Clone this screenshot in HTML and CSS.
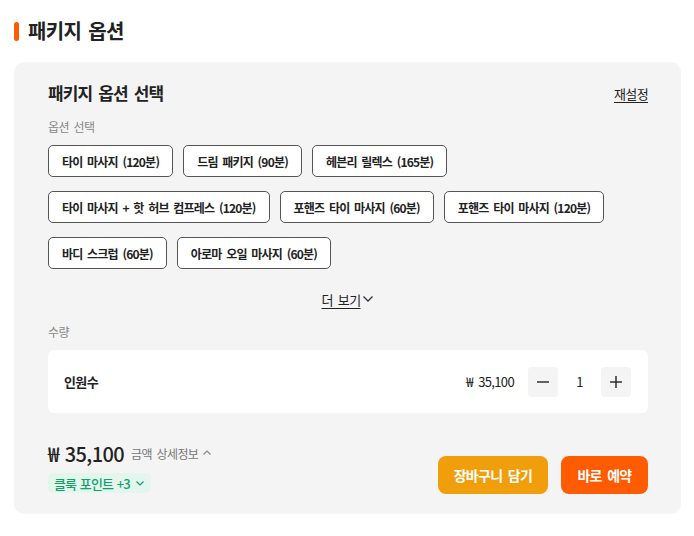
FILE: index.html
```html
<!DOCTYPE html>
<html lang="ko">
<head>
<meta charset="utf-8">
<link rel="stylesheet" href="styles.css">
</head>
<body>
<div class="page">
  <h2 class="section-title"><span class="bar"></span>패키지 옵션</h2>
  <div class="card">
    <div class="card-head">
      <h3 class="card-title">패키지 옵션 선택</h3>
      <a class="reset">재설정</a>
    </div>
    <div class="label label-options">옵션 선택</div>
    <div class="chips">
      <button class="chip">타이 마사지 (120분)</button>
      <button class="chip">드림 패키지 (90분)</button>
      <button class="chip">헤븐리 릴렉스 (165분)</button>
      <button class="chip">타이 마사지 + 핫 허브 컴프레스 (120분)</button>
      <button class="chip">포핸즈 타이 마사지 (60분)</button>
      <button class="chip">포핸즈 타이 마사지 (120분)</button>
      <button class="chip">바디 스크럽 (60분)</button>
      <button class="chip">아로마 오일 마사지 (60분)</button>
    </div>
    <div class="more"><a class="more-link">더 보기</a><svg class="chev" width="12" height="12" viewBox="0 0 12 12"><polyline points="1.5,3.5 6,8 10.5,3.5" fill="none" stroke="#333" stroke-width="1.3"/></svg></div>
    <div class="label label-qty">수량</div>
    <div class="qty-card">
      <span class="qty-name">인원수</span>
      <div class="qty-right">
        <span class="qty-price">₩ 35,100</span>
        <button class="qty-btn"><svg width="14" height="14" viewBox="0 0 14 14"><line x1="1" y1="7" x2="13" y2="7" stroke="#222" stroke-width="1.4"/></svg></button>
        <span class="qty-num">1</span>
        <button class="qty-btn"><svg width="14" height="14" viewBox="0 0 14 14"><line x1="1" y1="7" x2="13" y2="7" stroke="#222" stroke-width="1.4"/><line x1="7" y1="1" x2="7" y2="13" stroke="#222" stroke-width="1.4"/></svg></button>
      </div>
    </div>
    <div class="footer">
      <div class="total">
        <div class="price-line">
          <span class="price">₩ 35,100</span>
          <span class="detail">금액 상세정보</span>
          <svg class="up" width="10" height="10" viewBox="0 0 10 10"><polyline points="1.5,6.5 5,3 8.5,6.5" fill="none" stroke="#888" stroke-width="1.2"/></svg>
        </div>
        <div class="points">클룩 포인트 +3<svg class="pt-chev" width="10" height="10" viewBox="0 0 10 10"><polyline points="1.5,3.5 5,7 8.5,3.5" fill="none" stroke="#12a06a" stroke-width="1.2"/></svg></div>
      </div>
      <div class="actions">
        <button class="btn btn-cart">장바구니 담기</button>
        <button class="btn btn-book">바로 예약</button>
      </div>
    </div>
  </div>
</div>
</body>
</html>
```

FILE: styles.css
```css
* { box-sizing: border-box; }
html, body {
  margin: 0;
  padding: 0;
  background: #ffffff;
}
body {
  font-family: "Noto Sans CJK KR", "Noto Sans", "Liberation Sans", sans-serif;
  color: #222222;
  letter-spacing: -0.04em;
  word-spacing: 2px;
  width: 694px;
  height: 536px;
  overflow: hidden;
}
.page {
  padding: 16px 13px 0 14px;
}
.section-title {
  display: flex;
  align-items: center;
  margin: 0;
  height: 30px;
  font-size: 20px;
  font-weight: 700;
  line-height: 30px;
  color: #222;
}
.bar {
  display: inline-block;
  width: 5px;
  height: 19px;
  background: #ff5b00;
  border-radius: 3px;
  margin-right: 9px;
}
.card {
  margin-top: 16px;
  width: 667px;
  background: #f4f4f4;
  border-radius: 10px;
  padding: 19px 33px 20px 34px;
}
.card-head {
  display: flex;
  justify-content: space-between;
  align-items: center;
  height: 24px;
}
.card-title {
  margin: 0;
  font-size: 17px;
  font-weight: 700;
  line-height: 24px;
  color: #222;
  letter-spacing: -0.05em;
}
.reset {
  font-size: 13px;
  color: #222;
  text-decoration: underline;
  text-underline-offset: 3px;
  cursor: pointer;
}
.label {
  font-size: 12px;
  line-height: 18px;
  color: #888;
}
.label-options { margin-top: 13px; }
.chips {
  margin-top: 9px;
  display: flex;
  flex-wrap: wrap;
  column-gap: 10px;
  row-gap: 14px;
}
.chip {
  height: 32px;
  padding: 0 13px;
  border: 1px solid #555;
  border-radius: 5px;
  background: #fff;
  font-family: inherit;
  letter-spacing: -0.065em;
  word-spacing: 2px;
  font-size: 12px;
  font-weight: 700;
  color: #222;
}
.more {
  margin-top: 20px;
  display: flex;
  justify-content: center;
  align-items: center;
  height: 20px;
  font-size: 13px;
  color: #222;
}
.more-link {
  text-decoration: underline;
  text-underline-offset: 3px;
}
.chev { margin-left: 2px; }
.label-qty { margin-top: 14px; }
.qty-card {
  margin-top: 9px;
  height: 63px;
  background: #fff;
  border-radius: 6px;
  padding: 0 17px 0 16px;
  display: flex;
  align-items: center;
  justify-content: space-between;
}
.qty-name {
  font-size: 13px;
  font-weight: 700;
  color: #222;
}
.qty-right {
  display: flex;
  align-items: center;
}
.qty-price {
  font-size: 13px;
  color: #222;
  word-spacing: 3px;
  margin-right: 14px;
}
.qty-btn {
  width: 30px;
  height: 30px;
  border: none;
  border-radius: 4px;
  background: #f4f4f4;
  display: flex;
  align-items: center;
  justify-content: center;
  padding: 0;
}
.qty-num {
  width: 43px;
  text-align: center;
  font-size: 13px;
  color: #222;
}
.footer {
  margin-top: 26px;
  display: flex;
  justify-content: space-between;
  align-items: flex-end;
}
.price-line {
  display: flex;
  align-items: center;
  height: 28px;
}
.price {
  font-size: 20px;
  font-weight: 500;
  color: #222;
  letter-spacing: -0.03em;
  word-spacing: 2px;
}
.detail {
  margin-left: 7px;
  font-size: 12px;
  color: #777;
}
.up { margin-left: 4px; }
.points {
  margin-top: 6px;
  display: inline-flex;
  align-items: center;
  height: 20px;
  padding: 0 6px 0 6px;
  background: #e3f6ee;
  border-radius: 5px;
  font-size: 13px;
  font-weight: 500;
  color: #12a06a;
  letter-spacing: -0.07em;
  word-spacing: 1px;
}
.pt-chev { margin-left: 5px; }
.actions {
  display: flex;
  gap: 13px;
}
.btn {
  height: 38px;
  border: none;
  border-radius: 8px;
  font-family: inherit;
  letter-spacing: inherit;
  word-spacing: inherit;
  font-size: 14px;
  font-weight: 700;
  color: #fff;
  padding: 0;
}
.btn-cart { width: 110px; background: #f09e0c; }
.btn-book { width: 87px; background: #ff5b00; }
```
